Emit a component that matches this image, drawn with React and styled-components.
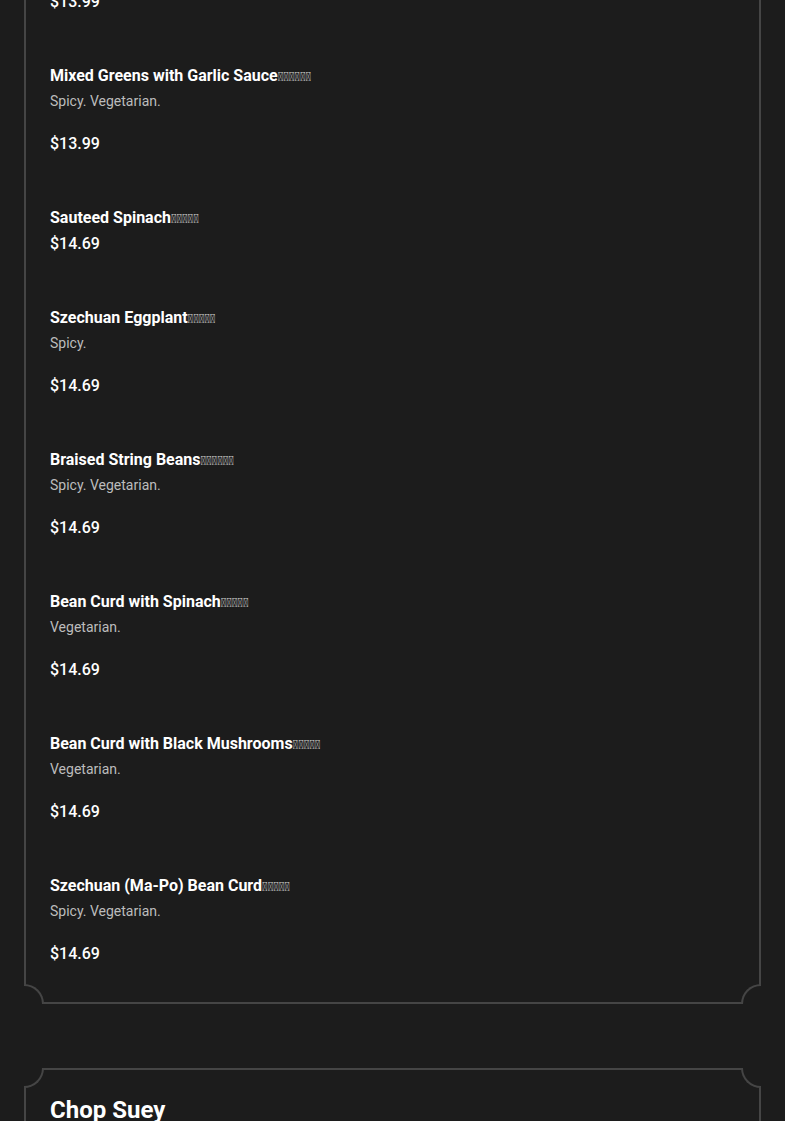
import React from "react";
import styled, { createGlobalStyle, css } from "styled-components";

const Global = createGlobalStyle`
  html, body { margin: 0; padding: 0; background: #1c1c1c; }
  body { font-family: Roboto, "Noto Sans", "Liberation Sans", sans-serif; color: #fff; overflow: hidden; }
`;

const Page = styled.main`
  padding: 0 24px;
  margin-top: -36px;
  display: flex;
  flex-direction: column;
  gap: 64px;
`;

const Card = styled.section`
  position: relative;
  border: 2px solid #454545;
  padding: 24px 24px 36px;
`;

const Corner = styled.span`
  position: absolute;
  width: 20px;
  height: 20px;
  box-sizing: border-box;
  background: #1c1c1c;
  border: 0 solid #454545;
  ${({ $pos }) => $pos === "tl" && css`
    top: -2px; left: -2px;
    border-right-width: 2px; border-bottom-width: 2px;
    border-bottom-right-radius: 20px;
  `}
  ${({ $pos }) => $pos === "tr" && css`
    top: -2px; right: -2px;
    border-left-width: 2px; border-bottom-width: 2px;
    border-bottom-left-radius: 20px;
  `}
  ${({ $pos }) => $pos === "bl" && css`
    bottom: -2px; left: -2px;
    border-right-width: 2px; border-top-width: 2px;
    border-top-right-radius: 20px;
  `}
  ${({ $pos }) => $pos === "br" && css`
    bottom: -2px; right: -2px;
    border-left-width: 2px; border-top-width: 2px;
    border-top-left-radius: 20px;
  `}
`;

const Heading = styled.h2`
  margin: 0;
  font-size: 24px;
  line-height: 32px;
  font-weight: 700;
  color: #fff;
`;

const List = styled.div`
  display: flex;
  flex-direction: column;
  gap: 51px;
`;

const Item = styled.article`
  display: flex;
  flex-direction: column;
`;

const Name = styled.h3`
  margin: 0;
  height: 22px;
  font-size: 16px;
  line-height: 22px;
  font-weight: 700;
  color: #fff;
`;

const Zh = styled.span`
  font-size: 12.5px;
  line-height: 1;
  font-weight: 400;
  color: #d0d0d0;
`;

const Desc = styled.p`
  margin: 3px 0 17px;
  font-size: 14px;
  line-height: 22px;
  color: #bcbcbc;
`;

const Price = styled.div`
  margin-top: 3px;
  font-size: 16px;
  line-height: 24px;
  font-weight: 500;
  color: #fff;
  ${({ $first }) => $first && css`margin-top: 0;`}
`;

const tofu = (n) => "\uE000".repeat(n);

const items = [
  { name: "Mixed Greens with Garlic Sauce", zh: 6, desc: "Spicy. Vegetarian.", price: "$13.99" },
  { name: "Sauteed Spinach", zh: 5, price: "$14.69" },
  { name: "Szechuan Eggplant", zh: 5, desc: "Spicy.", price: "$14.69" },
  { name: "Braised String Beans", zh: 6, desc: "Spicy. Vegetarian.", price: "$14.69" },
  { name: "Bean Curd with Spinach", zh: 5, desc: "Vegetarian.", price: "$14.69" },
  { name: "Bean Curd with Black Mushrooms", zh: 5, desc: "Vegetarian.", price: "$14.69" },
  { name: "Szechuan (Ma-Po) Bean Curd", zh: 5, desc: "Spicy. Vegetarian.", price: "$14.69" },
];

const Corners = () => (
  <>
    <Corner $pos="tl" />
    <Corner $pos="tr" />
    <Corner $pos="bl" />
    <Corner $pos="br" />
  </>
);

export default function App() {
  return (
    <>
      <Global />
      <Page>
        <Card>
          <Corners />
          <List>
            <Item>
              <Price $first>$13.99</Price>
            </Item>
            {items.map((it) => (
              <Item key={it.name}>
                <Name>
                  {it.name}
                  <Zh>{tofu(it.zh)}</Zh>
                </Name>
                {it.desc && <Desc>{it.desc}</Desc>}
                <Price>{it.price}</Price>
              </Item>
            ))}
          </List>
        </Card>
        <Card>
          <Corners />
          <Heading>Chop Suey</Heading>
        </Card>
      </Page>
    </>
  );
}
